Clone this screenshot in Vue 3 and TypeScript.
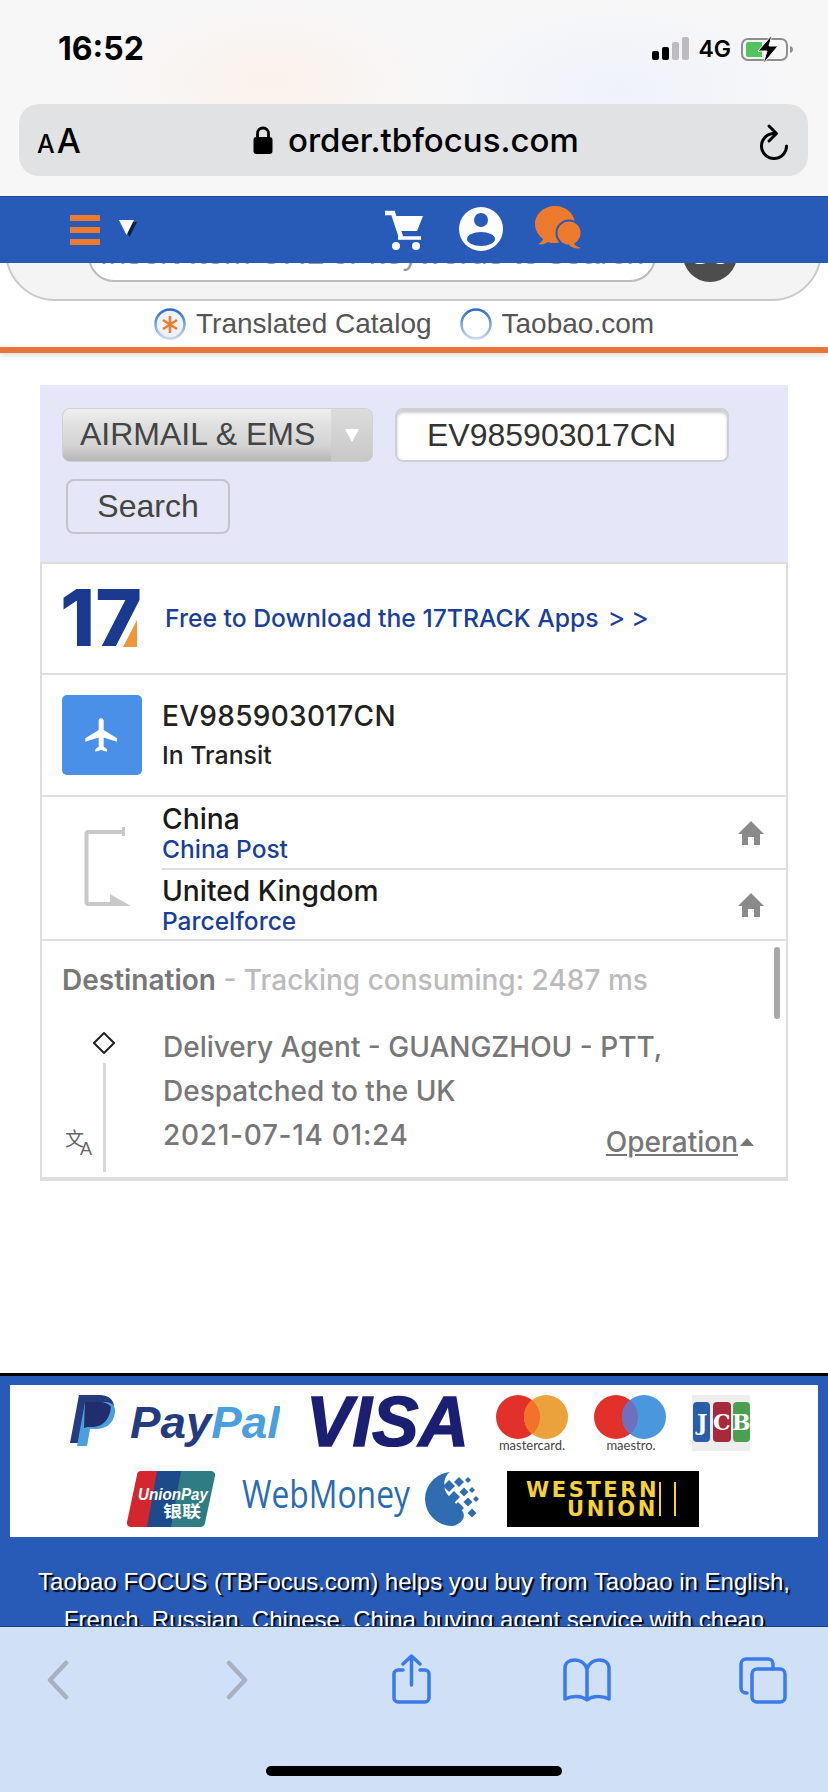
<script setup lang="ts">
interface Diamond { x: number; y: number; r: number }
const diamonds: Diamond[] = [
  { x: 24, y: 15, r: 6 }, { x: 34, y: 11, r: 5 }, { x: 43, y: 9, r: 3 },
  { x: 29, y: 26, r: 6 }, { x: 39, y: 21, r: 4.5 }, { x: 47, y: 19, r: 3 },
  { x: 33, y: 37, r: 6 }, { x: 43, y: 31, r: 4.5 }, { x: 51, y: 28, r: 3 },
  { x: 47, y: 42, r: 4.5 }
]
const diamondPoints = (d: Diamond): string =>
  `${d.x},${d.y - d.r} ${d.x + d.r},${d.y} ${d.x},${d.y + d.r} ${d.x - d.r},${d.y}`
</script>

<template>
  <div class="screen">
    <header class="chrome">
      <div class="status">
        <span class="time">16:52</span>
        <div class="status-right">
          <svg width="38" height="24" viewBox="0 0 38 24">
            <rect x="0" y="14" width="7" height="9" rx="2" fill="#000" />
            <rect x="10" y="10" width="7" height="13" rx="2" fill="#000" />
            <rect x="20" y="5" width="7" height="18" rx="2" fill="#bdbdbf" />
            <rect x="30" y="0" width="7" height="23" rx="2" fill="#bdbdbf" />
          </svg>
          <span class="net">4G</span>
          <svg width="56" height="30" viewBox="0 0 56 30">
            <rect x="4" y="5" width="45" height="21" rx="6" fill="none" stroke="#8e8e90" stroke-width="2" />
            <path d="M8 10a2 2 0 0 1 2-2h14v15H10a2 2 0 0 1-2-2z" fill="#53c25f" />
            <path d="M52 12c2 .5 3 2 3 3.500s-1 3-3 3.500z" fill="#8e8e90" />
            <path d="M34 1 20 17h9l-4 13 15-18h-9l3-11z" fill="#000" stroke="#f6f6f7" stroke-width="1" />
          </svg>
        </div>
      </div>
      <div class="address">
        <span class="aa"><span class="aa-s">A</span>A</span>
        <div class="url">
          <svg width="20" height="28" viewBox="0 0 20 28">
            <path d="M4.500 12V7.500a5.500 5.500 0 0 1 11 0V12" fill="none" stroke="#000" stroke-width="2.800" />
            <rect x="0.500" y="11" width="19" height="17" rx="3" fill="#000" />
          </svg>
          <span>order.tbfocus.com</span>
        </div>
        <svg class="reload" width="32" height="38" viewBox="0 0 32 38">
          <path d="M16 10.500a12.500 12.500 0 1 0 12.500 12.500" fill="none" stroke="#000" stroke-width="3" stroke-linecap="round" />
          <path d="M11 3l7.500 7.500L11 18" fill="none" stroke="#000" stroke-width="3" stroke-linecap="round" stroke-linejoin="round" />
        </svg>
      </div>
    </header>

    <nav class="topnav">
      <div class="burger"><i></i><i></i><i></i></div>
      <svg class="caret" width="18" height="17" viewBox="0 0 18 17">
        <path d="M3 2h15l-7.500 15z" fill="#0b1e44" />
        <path d="M0 0h15L7.500 15z" fill="#fff" />
      </svg>
      <svg class="cart" width="38" height="40" viewBox="0 0 38 40">
        <path d="M0 3h8l8 24" fill="none" stroke="#fff" stroke-width="4.500" />
        <path d="M11 6h27l-6 15H16z" fill="#fff" />
        <path d="M13 28h23" fill="none" stroke="#fff" stroke-width="3.500" />
        <circle cx="11" cy="36" r="4" fill="#fff" />
        <circle cx="31" cy="36" r="4" fill="#fff" />
      </svg>
      <svg class="user" width="44" height="44" viewBox="0 0 44 44">
        <circle cx="22" cy="22" r="22" fill="#fff" />
        <circle cx="22" cy="13" r="7" fill="#285bb8" />
        <ellipse cx="22" cy="32" rx="14" ry="7" fill="#285bb8" />
      </svg>
      <svg class="chat" width="46" height="44" viewBox="0 0 46 44">
        <path d="M3 38c3-1 4-3 5-5C3 29 0 24 0 18 0 8 9 0 20 0s20 8 20 18-9 19-20 19c-3 0-5 0-7-1-3 2-6 3-10 2z" fill="#ee7a2d" />
        <circle cx="34" cy="27" r="12.500" fill="#ee7a2d" stroke="#285bb8" stroke-width="2" />
        <path d="M38 36c1 3 4 5 8 6-4 1-9 0-12-3z" fill="#ee7a2d" />
      </svg>
    </nav>

    <main class="page">
      <div class="search-card">
        <div class="search-input">Insert Item URL or keywords to search</div>
        <div class="go">GO</div>
      </div>
      <div class="catalog">
        <svg width="32" height="32" viewBox="0 0 32 32">
          <defs>
            <linearGradient id="ring1" x1="0" y1="0" x2="0" y2="1">
              <stop offset="0" stop-color="#2f6cc0" />
              <stop offset="1" stop-color="#c5d8f0" />
            </linearGradient>
          </defs>
          <circle cx="16" cy="16" r="14.500" fill="#eef3fb" stroke="url(#ring1)" stroke-width="2.500" />
          <path d="M16 8v17M9 12l14 9M23 12l-14 9" stroke="#ee7a2d" stroke-width="2.500" />
        </svg>
        <span class="cat-label">Translated Catalog</span>
        <svg class="cat-second" width="32" height="32" viewBox="0 0 32 32">
          <circle cx="16" cy="16" r="14.500" fill="#fff" stroke="url(#ring1)" stroke-width="2.500" />
        </svg>
        <span class="cat-label">Taobao.com</span>
      </div>
      <div class="rule"></div>

      <section class="panel">
        <div class="form">
          <div class="form-row">
            <div class="select">
              <span class="select-text">AIRMAIL &amp; EMS</span>
              <span class="select-arrow"><i></i></span>
            </div>
            <div class="field">EV985903017CN</div>
          </div>
          <button class="search-btn" type="button">Search</button>
        </div>

        <div class="box">
          <div class="row promo">
            <svg class="logo" width="82" height="58" viewBox="0 0 82 58">
              <text x="-2" y="56" class="logo17" textLength="82" lengthAdjust="spacingAndGlyphs">17</text>
              <path d="M75 30V57H61z" fill="#f0963a" />
            </svg>
            <span class="promo-text">Free to Download the 17TRACK Apps<span class="promo-arrows">&gt; &gt;</span></span>
          </div>

          <div class="row status-row">
            <div class="plane">
              <svg width="40" height="40" viewBox="0 0 24 24">
                <path d="M21 16v-2l-8-5V3.500c0-.83-.67-1.500-1.500-1.500S10 2.670 10 3.500V9l-8 5v2l8-2.500V19l-2 1.500V22l3.500-1 3.500 1v-1.500L13 19v-5.500l8 2.500z" fill="#fff" />
              </svg>
            </div>
            <div class="status-text">
              <div class="tracking">EV985903017CN</div>
              <div class="transit">In Transit</div>
            </div>
          </div>

          <div class="route">
            <svg class="bracket" width="50" height="82" viewBox="0 0 50 82">
              <path d="M40 6H4.500a2 2 0 0 0-2 2v68a2 2 0 0 0 2 2H30" fill="none" stroke="#c9c9c9" stroke-width="4" />
              <path d="M38 1h3v9h-3z" fill="#c9c9c9" />
              <path d="M26 68l21 12H26z" fill="#c9c9c9" />
            </svg>
            <div class="route-list">
              <div class="leg leg-first">
                <div>
                  <div class="country">China</div>
                  <div class="carrier">China Post</div>
                </div>
                <svg width="26" height="24" viewBox="0 0 26 24">
                  <path d="M13 0 0 13h4v11h6v-8h6v8h6V13h4z" fill="#8a8a8a" />
                </svg>
              </div>
              <div class="leg">
                <div>
                  <div class="country">United Kingdom</div>
                  <div class="carrier">Parcelforce</div>
                </div>
                <svg width="26" height="24" viewBox="0 0 26 24">
                  <path d="M13 0 0 13h4v11h6v-8h6v8h6V13h4z" fill="#8a8a8a" />
                </svg>
              </div>
            </div>
          </div>

          <div class="events">
            <div class="dest"><b>Destination</b> - Tracking consuming: 2487 ms</div>
            <div class="timeline">
              <svg class="translate" width="28" height="26" viewBox="0 0 28 26">
                <text x="0" y="17" class="tr-zh">文<tspan class="tr-en" x="15" y="26">A</tspan></text>
              </svg>
              <div class="marker">
                <svg width="22" height="22" viewBox="0 0 22 22">
                  <path d="M11 1 21 11 11 21 1 11z" fill="#fff" stroke="#222" stroke-width="2" />
                </svg>
                <i></i>
              </div>
              <div class="event">
                <div>Delivery Agent - GUANGZHOU - PTT,</div>
                <div>Despatched to the UK</div>
                <div class="event-last">
                  <span class="date">2021-07-14 01:24</span>
                  <span class="operation"><u>Operation</u><i></i></span>
                </div>
              </div>
            </div>
            <div class="scrollbar"></div>
          </div>
        </div>
      </section>

      <footer class="foot">
        <div class="pay">
          <div class="pay-row">
            <svg width="210" height="52" viewBox="0 0 210 52">
              <path d="M9 0h20c10 0 16 5 15 15-1 12-9 18-20 18h-7l-3 15H0z" fill="#253b80" />
              <path d="M15 7h20c8 0 11 5 10 11-2 11-9 16-19 16h-6l-3 17H7z" fill="#4a9fdc" />
              <path d="M15 7h14c6 0 10 2 12 5-1 12-8 19-17 20h-7l-3 1z" fill="#222d6e" />
              <text x="60" y="43" class="paypal" textLength="150" lengthAdjust="spacingAndGlyphs"><tspan fill="#253b80">Pay</tspan><tspan fill="#4a9fdc">Pal</tspan></text>
            </svg>
            <svg width="164" height="52" viewBox="0 0 164 52">
              <text x="0" y="51" class="visa" textLength="163" lengthAdjust="spacingAndGlyphs">VISA</text>
            </svg>
            <svg width="72" height="56" viewBox="0 0 72 56">
              <circle cx="22" cy="22" r="22" fill="#e2312a" />
              <circle cx="50" cy="22" r="22" fill="#eba13c" />
              <path d="M36 5a22 22 0 0 1 0 34 22 22 0 0 1 0-34z" fill="#f2722a" />
              <text x="36" y="55" class="cardname" text-anchor="middle">mastercard.</text>
            </svg>
            <svg width="72" height="56" viewBox="0 0 72 56">
              <circle cx="22" cy="22" r="22" fill="#e2312a" />
              <circle cx="50" cy="22" r="22" fill="#4a97de" />
              <path d="M36 5a22 22 0 0 1 0 34 22 22 0 0 1 0-34z" fill="#6f6fc0" />
              <text x="37" y="55" class="cardname" text-anchor="middle">maestro.</text>
            </svg>
            <svg width="58" height="56" viewBox="0 0 58 56">
              <rect width="58" height="56" fill="#eeeeee" />
              <rect x="1" y="7" width="17" height="40" rx="4" fill="#2a5ea8" />
              <rect x="21" y="7" width="18" height="40" rx="4" fill="#a6293c" />
              <rect x="41" y="7" width="17" height="40" rx="4" fill="#4aa050" />
              <text x="5" y="35" class="jcb">J</text>
              <text x="21" y="35" class="jcb">C</text>
              <text x="40" y="35" class="jcb">B</text>
            </svg>
          </div>
          <div class="pay-row pay-row-2">
            <svg width="88" height="56" viewBox="0 0 88 56">
              <path d="M14 0h20L24 56H4a4 4 0 0 1-4-5L10 4a4 4 0 0 1 4-4z" fill="#d3262f" />
              <path d="M30 0h28L48 56H20z" fill="#1c4a8a" />
              <path d="M54 0h30a4 4 0 0 1 4 5L78 52a5 5 0 0 1-5 4H44z" fill="#2f7c84" />
              <text x="11" y="29" class="upay" textLength="70" lengthAdjust="spacingAndGlyphs">UnionPay</text>
              <text x="36" y="46" class="upay-zh" textLength="38" lengthAdjust="spacingAndGlyphs">银联</text>
            </svg>
            <svg width="238" height="56" viewBox="0 0 238 56">
              <text x="0" y="37" class="webmoney" textLength="168" lengthAdjust="spacingAndGlyphs">WebMoney</text>
              <g transform="translate(183 0)">
                <circle cx="27" cy="28" r="27" fill="#2f6cb0" />
                <path d="M26 0C40 0 55 12 55 28c0 16-12 27-27 27 8-2 13-8 10-14-4-7-15-14-18-22-2-8 0-15 6-19z" fill="#fff" />
                <polygon v-for="(d, i) in diamonds" :key="i" :points="diamondPoints(d)" fill="#2f6cb0" />
              </g>
            </svg>
            <svg width="192" height="56" viewBox="0 0 192 56">
              <rect width="192" height="56" fill="#000" />
              <text x="19" y="26" class="wu">WESTERN<tspan x="60" y="45">UNION</tspan></text>
              <rect x="152" y="11" width="2" height="34" fill="#f5d23a" />
              <rect x="167" y="11" width="2" height="34" fill="#f5d23a" />
            </svg>
          </div>
        </div>
        <p class="blurb">Taobao FOCUS (TBFocus.com) helps you buy from Taobao in English, French, Russian, Chinese, China buying agent service with cheap</p>
      </footer>
    </main>

    <div class="toolbar">
      <div class="tool-row">
        <svg class="t-back" width="22" height="50" viewBox="0 0 22 50">
          <path d="M19 9 3 26l16 17" fill="none" stroke="#a8b2bf" stroke-width="4.500" stroke-linecap="round" stroke-linejoin="round" />
        </svg>
        <svg class="t-fwd" width="22" height="50" viewBox="0 0 22 50">
          <path d="M3 9l16 17L3 43" fill="none" stroke="#a8b2bf" stroke-width="4.500" stroke-linecap="round" stroke-linejoin="round" />
        </svg>
        <svg class="t-share" width="40" height="50" viewBox="0 0 40 50">
          <path d="M11 16H6a4 4 0 0 0-4 4v24a4 4 0 0 0 4 4h27a4 4 0 0 0 4-4V20a4 4 0 0 0-4-4h-5" fill="none" stroke="#3a7bea" stroke-width="3.500" stroke-linecap="round" />
          <path d="M19.500 31V2M11 10l8.500-8L28 10" fill="none" stroke="#3a7bea" stroke-width="3.500" stroke-linecap="round" stroke-linejoin="round" />
        </svg>
        <svg class="t-book" width="50" height="50" viewBox="0 0 50 50">
          <path d="M25 15c-2-6-7-9-12-9C7 6 3 9 3 14v31c6-3 16-4 22 1 6-5 16-4 22-1V14c0-5-4-8-10-8-5 0-10 3-12 9zm0 0v31" fill="none" stroke="#3a7bea" stroke-width="3.500" stroke-linejoin="round" />
        </svg>
        <svg class="t-tabs" width="48" height="50" viewBox="0 0 48 50">
          <path d="M8 39H7a5 5 0 0 1-5-5V10a5 5 0 0 1 5-5h22a5 5 0 0 1 5 5v5" fill="none" stroke="#3a7bea" stroke-width="3.500" stroke-linecap="round" />
          <rect x="13" y="15" width="33" height="33" rx="5" fill="none" stroke="#3a7bea" stroke-width="3.500" />
        </svg>
      </div>
      <div class="home"></div>
    </div>
  </div>
</template>

<style>
html, body { margin: 0; padding: 0; background: #fff; }
</style>

<style scoped>
.screen {
  width: 828px;
  height: 1792px;
  display: flex;
  flex-direction: column;
  overflow: hidden;
  font-family: "Liberation Sans", Arial, sans-serif;
}
.chrome {
  height: 196px;
  flex: none;
  box-sizing: border-box;
  background:
    radial-gradient(ellipse 180px 90px at 270px 80px, #fbf2ec, rgba(251, 242, 236, 0)),
    radial-gradient(ellipse 180px 90px at 620px 90px, #eff2fb, rgba(239, 242, 251, 0)),
    #f7f7f8;
}
.status {
  height: 104px;
  box-sizing: border-box;
  padding: 0 34px 8px 58px;
  display: flex;
  align-items: center;
  justify-content: space-between;
}
.time {
  font-family: Inter, "Liberation Sans", sans-serif;
  font-weight: 700;
  font-size: 32px;
  color: #000;
}
.status-right { display: flex; align-items: center; margin-top: 2px; }
.net {
  font-family: Inter, "Liberation Sans", sans-serif;
  font-weight: 600;
  font-size: 23px;
  margin: 0 7px 0 8px;
  color: #000;
}
.address {
  height: 72px;
  margin: 0 20px 0 19px;
  border-radius: 20px;
  background: #e1e2e4;
  display: flex;
  align-items: center;
  padding: 0 18px;
  position: relative;
}
.aa { font-size: 34px; width: 60px; color: #000; font-family: Inter, sans-serif; font-weight: 500; }
.aa-s { font-size: 25px; margin-right: 2px; }
.url {
  flex: 1;
  display: flex;
  align-items: center;
  margin-left: 156px;
  gap: 15px;
  font-family: Inter, "Liberation Sans", sans-serif;
  font-weight: 500;
  font-size: 33px;
  color: #000;
}
.reload { margin-top: 4px; }

.topnav {
  height: 67px;
  flex: none;
  box-sizing: border-box;
  background: #285bb8;
  border-top: 1px solid #1e4a9c;
  display: flex;
  align-items: center;
  padding-left: 70px;
}
.burger { width: 30px; display: flex; flex-direction: column; gap: 6px; margin-top: 0; }
.burger i { display: block; height: 6px; background: #ee7a2d; }
.caret { margin-left: 19px; margin-top: -4px; }
.cart { margin-left: 248px; }
.user { margin-left: 36px; margin-top: -3px; }
.chat { margin-left: 32px; margin-top: -5px; }

.page { flex: 1; min-height: 0; overflow: hidden; background: #fff; }
.search-card {
  height: 90px;
  margin: -52px 6px 0 5px;
  box-sizing: border-box;
  border: 2px solid #c9c9c9;
  border-radius: 0 0 50px 50px;
  background: #f4f4f4;
  display: flex;
  align-items: flex-end;
  padding: 0 0 17px 81px;
}
.search-input {
  width: 568px;
  height: 52px;
  box-sizing: border-box;
  line-height: 42px;
  border: 2px solid #bdbdbd;
  border-radius: 26px;
  background: #fff;
  text-align: center;
  font-size: 32px;
  color: #999;
  white-space: nowrap;
  overflow: hidden;
}
.go {
  width: 54px;
  height: 54px;
  margin-left: 27px;
  border-radius: 50%;
  background: #4d4d4d;
  color: #fff;
  text-align: center;
  line-height: 54px;
  font-size: 26px;
  font-weight: 700;
}
.catalog {
  height: 46px;
  display: flex;
  align-items: center;
  padding-left: 154px;
}
.cat-label { font-size: 28px; color: #555; margin-left: 10px; }
.cat-second { margin-left: 28px; }
.rule {
  height: 6px;
  background: #e8763a;
  box-shadow: 0 3px 5px rgba(0, 0, 0, 0.12);
}

.panel { margin: 32px 40px 0; }
.form {
  background: #e5e6f7;
  padding: 23px 22px 28px;
}
.form-row { display: flex; gap: 22px; }
.select {
  width: 311px;
  height: 54px;
  box-sizing: border-box;
  border-radius: 8px;
  border: 1px solid #cfcfd4;
  background: linear-gradient(#f0f0f0, #e0e0e0 30%, #d4d4d4 70%, #b6b6b6);
  display: flex;
  overflow: hidden;
}
.select-text {
  flex: 1;
  font-size: 32px;
  line-height: 50px;
  color: #444;
  padding-left: 17px;
  white-space: nowrap;
}
.select-arrow {
  width: 41px;
  display: flex;
  align-items: center;
  justify-content: center;
  background: linear-gradient(#dcdcdc, #c8c8c8);
}
.select-arrow i {
  width: 0;
  height: 0;
  border-left: 7px solid transparent;
  border-right: 7px solid transparent;
  border-top: 13px solid #fff;
}
.field {
  width: 334px;
  height: 54px;
  box-sizing: border-box;
  border: 2px solid #cfcfd4;
  border-radius: 8px;
  background: #fff;
  box-shadow: inset 0 3px 3px rgba(0, 0, 0, 0.2);
  font-size: 32px;
  line-height: 50px;
  color: #333;
  padding-left: 30px;
}
.search-btn {
  display: block;
  width: 164px;
  height: 55px;
  margin: 17px 0 0 4px;
  border: 2px solid #c4c4cc;
  border-radius: 8px;
  background: transparent;
  font-family: inherit;
  font-size: 32px;
  color: #444;
  padding: 0;
}

.box {
  border: 2px solid #dedede;
  border-bottom-width: 4px;
  font-family: Inter, "Liberation Sans", sans-serif;
  background: #fff;
}
.row, .route { border-bottom: 2px solid #dedede; }
.row { display: flex; align-items: center; padding-left: 20px; }
.promo { height: 109px; }
.logo { overflow: visible; }
.logo17 {
  font-family: Inter, "Liberation Sans", sans-serif;
  font-weight: 800;
  font-size: 78px;
  fill: #1a3a8f;
}
.promo-text {
  margin-left: 21px;
  margin-top: -3px;
  font-weight: 500;
  font-size: 24.700px;
  color: #1b3e96;
  white-space: nowrap;
}
.promo-arrows { margin-left: 9px; font-size: 27px; font-weight: 400; word-spacing: -2px; }
.status-row { height: 120px; }
.plane {
  width: 80px;
  height: 80px;
  border-radius: 5px;
  background: #4a90e8;
  display: flex;
  align-items: center;
  justify-content: center;
}
.status-text { margin-left: 20px; }
.tracking { font-weight: 500; font-size: 28px; letter-spacing: 0.3px; color: #222; line-height: 36px; }
.transit { font-weight: 500; font-size: 24.800px; color: #222; line-height: 34px; margin-top: 4px; }

.route { display: flex; height: 142px; }
.bracket { margin: 29px 0 0 42px; flex: none; }
.route-list { margin-left: 28px; flex: 1; }
.leg {
  height: 69px;
  display: flex;
  align-items: center;
  justify-content: space-between;
  padding-right: 22px;
}
.leg-first { height: 71px; border-bottom: 2px solid #dedede; }
.country { font-weight: 500; font-size: 28.200px; color: #1a1a1a; line-height: 32px; }
.carrier { font-weight: 500; font-size: 24.500px; color: #1b3e96; line-height: 28px; }

.events { position: relative; height: 236px; }
.dest {
  height: 78px;
  box-sizing: border-box;
  padding-left: 20px;
  line-height: 78px;
  font-weight: 500;
  font-size: 28px;
  color: #bbb;
  white-space: nowrap;
}
.dest b { font-weight: 600; font-size: 28px; color: #777; }
.timeline { display: flex; height: 153px; }
.translate { margin: auto 0 17px 23px; flex: none; overflow: visible; }
.tr-zh { font-family: "Noto Sans CJK SC", sans-serif; font-size: 19px; fill: #666; }
.tr-en { font-family: "Liberation Sans", sans-serif; font-size: 18px; fill: #666; }
.marker {
  width: 22px;
  margin-left: 0;
  padding-top: 13px;
  display: flex;
  flex-direction: column;
  align-items: center;
  box-sizing: border-box;
  flex: none;
}
.marker svg { margin-bottom: 9px; }
.marker i { flex: 1; width: 3px; background: #d8d8d8; }
.event {
  flex: 1;
  margin: 6px 0 0 48px;
  padding-right: 32px;
  font-weight: 500;
  font-size: 28px;
  line-height: 44px;
  color: #777;
  white-space: nowrap;
}
.event-last { display: flex; justify-content: space-between; }
.date { letter-spacing: 0.7px; }
.operation { display: flex; align-items: center; margin-top: 7px; }
.operation i {
  width: 0;
  height: 0;
  margin-left: 2px;
  border-left: 7px solid transparent;
  border-right: 7px solid transparent;
  border-bottom: 8px solid #777;
}
.scrollbar {
  position: absolute;
  right: 6px;
  top: 6px;
  width: 6px;
  height: 72px;
  border-radius: 3px;
  background: #a8a8a8;
}

.foot {
  margin: 192px 0 0;
  border-top: 3px solid #000;
  background: #285bb8;
  padding: 9px 10px 40px;
}
.pay {
  height: 152px;
  box-sizing: border-box;
  background: #fff;
  padding-top: 10px;
}
.pay-row { display: flex; align-items: flex-start; gap: 26px; padding-left: 60px; }
.pay-row-2 { margin-top: 20px; padding-left: 117px; gap: 27px; }
.paypal { font-family: "Liberation Sans", sans-serif; font-weight: 700; font-style: italic; font-size: 44px; }
.visa {
  font-family: "Liberation Sans", sans-serif;
  font-weight: 700;
  font-style: italic;
  font-size: 71px;
  fill: #1a1f71;
  stroke: #1a1f71;
  stroke-width: 1.500px;
}
.cardname { font-family: Lato, sans-serif; font-size: 13px; fill: #444; }
.jcb { font-family: "DejaVu Serif", serif; font-weight: 700; font-size: 22px; fill: #fff; }
.upay { font-family: "Liberation Sans", sans-serif; font-weight: 700; font-style: italic; font-size: 17px; fill: #fff; }
.upay-zh { font-family: "Noto Sans CJK SC", sans-serif; font-weight: 700; font-size: 16px; fill: #fff; }
.webmoney { font-family: "Open Sans", sans-serif; font-size: 38px; fill: #2a6cb0; }
.wu { font-family: "DejaVu Sans", sans-serif; font-weight: 700; font-size: 21px; letter-spacing: 2.600px; fill: #f5d23a; }
.blurb {
  margin: 26px 0 0;
  padding: 0 20px;
  text-align: center;
  font-size: 24px;
  line-height: 38px;
  color: #fff;
  text-shadow: 2px 2px 1px #000;
}

.toolbar {
  height: 166px;
  flex: none;
  box-sizing: border-box;
  border-top: 1px solid #22406f;
  background: #d0e0f6;
  display: flex;
  flex-direction: column;
}
.tool-row { display: flex; padding: 27px 0 0 47px; }
.t-fwd { margin-left: 157px; }
.t-share { margin-left: 144px; }
.t-book { margin-left: 130px; }
.t-tabs { margin-left: 127px; }
.home {
  width: 296px;
  height: 10px;
  border-radius: 5px;
  background: #000;
  margin: auto 0 16px 266px;
}
</style>
